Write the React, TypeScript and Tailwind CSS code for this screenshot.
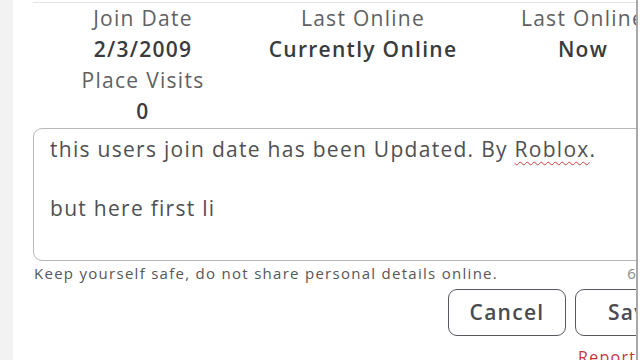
const stats = [
  { label: "Join Date", value: "2/3/2009" },
  { label: "Last Online", value: "Currently Online" },
  { label: "Last Online", value: "Now" },
];

export default function App() {
  return (
    <div
      className="flex h-[360px] w-[640px] overflow-hidden bg-white tracking-[0.08em]"
      style={{ fontFamily: '"Open Sans", "Liberation Sans", sans-serif' }}
    >
      <div className="w-[13px] shrink-0 bg-[#f2f2f2]" />
      <div className="relative w-[625px] shrink-0 overflow-hidden border-r-2 border-[#a9a9a9] bg-white">
        <div className="ml-[20px] mt-[2px] w-[700px] border-t border-[#e3e3e3]">
          <div className="grid w-[660px] grid-cols-3 text-center text-[21px] leading-[31px]">
            {stats.map((s, i) => (
              <div key={i} className="flex flex-col">
                <span className="text-[#606162]">{s.label}</span>
                <span className="font-[560] text-[#393b3d]">{s.value}</span>
              </div>
            ))}
            <div className="flex flex-col">
              <span className="text-[#606162]">Place Visits</span>
              <span className="font-[560] text-[#393b3d]">0</span>
            </div>
          </div>

          <div className="mt-[1px] h-[133px] w-[640px] rounded-[9px] border border-[#b8b8b8] px-[16px] pt-[6px] text-[21px] leading-[29.5px] text-[#4f5052]">
            <p>
              this users join date has been Updated. By{" "}
              <span className="underline decoration-[#d23b3b] decoration-wavy decoration-1 underline-offset-4">
                Roblox
              </span>
              .
            </p>
            <p className="mt-[29.5px]">but here first li</p>
          </div>

          <div className="flex w-[604px] justify-between pt-[1px] text-[15px] leading-[22px] text-[#555759]">
            <span className="pl-[1px]">Keep yourself safe, do not share personal details online.</span>
            <span className="text-[#8a8a8a]">6</span>
          </div>

          <div className="mt-[5px] flex gap-[9px] pl-[415px]">
            <button className="h-[47px] w-[118px] rounded-[9px] border border-[#55585e] text-[21px] font-[540] text-[#4a4c4f]">
              Cancel
            </button>
            <button className="h-[47px] w-[118px] rounded-[9px] border border-[#55585e] text-[21px] font-[540] text-[#4a4c4f]">
              Save
            </button>
          </div>

          <div className="mt-[11px] pl-[545px] text-[16px] leading-[20px] text-[#c9323a]">Report Abuse</div>
        </div>
      </div>
    </div>
  );
}
